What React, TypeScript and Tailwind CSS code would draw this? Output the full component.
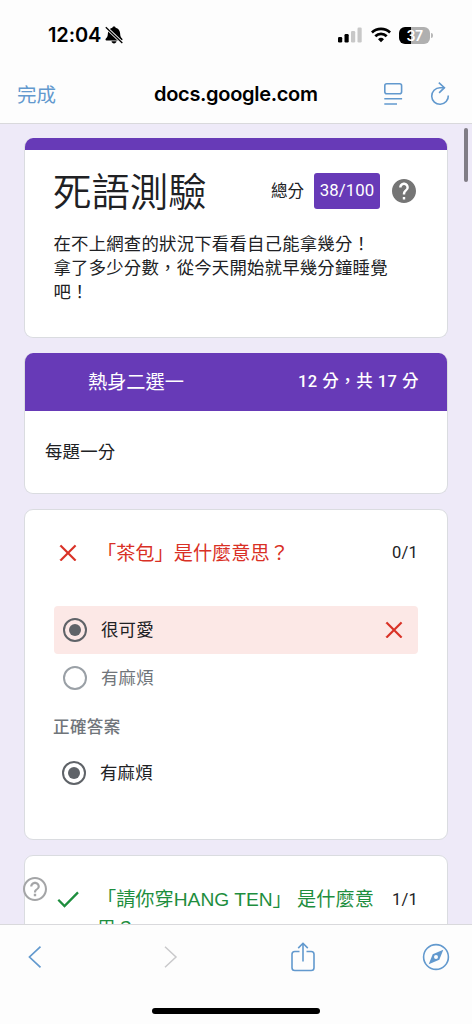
import type { ReactNode } from 'react';

type MarkProps = { className?: string };

const CrossMark = ({ className = '' }: MarkProps) => (
  <svg className={`h-6 w-6 shrink-0 ${className}`} viewBox="0 0 24 24" fill="#d93025">
    <path d="M20 5.2 18.8 4 12 10.8 5.2 4 4 5.2 10.8 12 4 18.8 5.2 20 12 13.2 18.8 20 20 18.8 13.2 12z" stroke="#d93025" strokeWidth="0.7" />
  </svg>
);

const CheckMark = ({ className = '' }: MarkProps) => (
  <svg className={`h-6 w-6 shrink-0 ${className}`} viewBox="0 0 24 24" fill="none" stroke="#1e8e3e" strokeWidth="2.3">
    <path d="M2.3 12.8 8.5 19 22 5.4" />
  </svg>
);

const Radio = ({ checked }: { checked: boolean }) => (
  <svg className="h-6 w-6 shrink-0" viewBox="0 0 24 24">
    <circle cx="12" cy="12" r="11" fill="none" stroke={checked ? '#5f6368' : '#9aa0a6'} strokeWidth="2" />
    {checked && <circle cx="12" cy="12" r="6" fill="#5f6368" />}
  </svg>
);

const Card = ({ className = '', children }: { className?: string; children: ReactNode }) => (
  <section className={`shrink-0 overflow-hidden rounded-[9px] border border-[#dadce0] bg-white ${className}`}>
    {children}
  </section>
);

const StatusBar = () => (
  <div className="flex h-[70px] items-center pl-12 pr-[39px] font-['Inter',sans-serif]">
    <span className="text-[20px] font-semibold leading-6 tracking-[-0.1px]">12:04</span>
    <svg className="ml-1 h-[18px] w-[18px]" viewBox="0 0 18 18">
      <path d="M9 .5c-.9 0-1.500.5-1.600 1.200C4.600 2.400 3 4.600 2.900 7.200c-.1 3.100-.9 4.300-2 5.400-.8.8-.4 1.900.5 1.900h15.200c.9 0 1.300-1.100.5-1.900-1.100-1.100-1.900-2.300-2-5.400-.1-2.600-1.700-4.800-4.500-5.500C10.500 1 9.900.5 9 .5zM6.500 15.300h5c-.2 1.300-1.200 2.100-2.500 2.100s-2.300-.8-2.500-2.100z" />
      <path d="M.8 1.200 17.300 17" stroke="#fdfdfd" strokeWidth="3" />
      <path d="M.8 1.200 17.300 17" stroke="#000" strokeWidth="1.3" />
    </svg>
    <svg className="ml-auto h-4 w-6" viewBox="0 0 24 16">
      <rect x="0" y="10" width="4.2" height="5.5" rx="1.2" />
      <rect x="6.5" y="7" width="4.2" height="8.5" rx="1.2" />
      <rect x="13" y="4" width="4.2" height="11.5" rx="1.2" fill="#c8c8c8" />
      <rect x="19.5" y="0.6" width="4.2" height="14.9" rx="1.2" fill="#c8c8c8" />
    </svg>
    <svg className="ml-[9px] h-4 w-5" viewBox="0 0 20 16" fill="none" stroke="#000" strokeWidth="2.7">
      <path d="M.9 5.500a13 13 0 0 1 18.200 0" />
      <path d="M4.300 9.200a8.200 8.200 0 0 1 11.400 0" />
      <path d="M10 15.200 7 12.200a4.300 4.300 0 0 1 6 0z" fill="#000" stroke="none" />
    </svg>
    <div className="ml-2 flex h-[17px] w-[31px] items-center justify-center rounded-[6px] bg-linear-to-r from-black from-38% to-[#b0b0b0] to-38%">
      <span className="mt-px text-[14px] font-semibold leading-[14px] tracking-[-0.5px] text-white">37</span>
    </div>
    <div className="ml-px h-[5px] w-[2px] rounded-r-full bg-[#b8b8b8]" />
  </div>
);

const BrowserBar = () => (
  <div className="flex h-[53px] items-center pb-[6px] pl-[17px] pr-[22px]">
    <span className="mt-1 w-[137px] text-[19.5px] leading-6 text-[#6299ce]">完成</span>
    <span className="font-['Inter',sans-serif] text-[20px] font-semibold leading-6 tracking-[-0.31px]">docs.google.com</span>
    <svg className="ml-auto h-6 w-5" viewBox="0 0 20 24" fill="none" stroke="#6299ce" strokeWidth="1.6">
      <rect x="1.8" y="1.8" width="16.8" height="10" rx="2" />
      <path d="M1.300 16.700h17.800M1.300 22h12.700" />
    </svg>
    <svg className="ml-[27px] h-6 w-5" viewBox="0 0 20 24" fill="none" stroke="#6299ce" strokeWidth="1.6">
      <path d="M14.500 5.700H10A8.300 8.300 0 1 0 18.300 13.500" />
      <path d="m8.800.6 5.600 5.100-5.300 5.100" />
    </svg>
  </div>
);

const Toolbar = () => (
  <footer className="h-[100px] shrink-0 border-t border-[#d9d9dc] bg-[#fdfdfd]">
    <div className="flex h-16 items-center justify-between pl-7 pr-[22px]">
      <svg className="h-6 w-[14px]" viewBox="0 0 14 24" fill="none" stroke="#6299ce" strokeWidth="1.7">
        <path d="M12.500 1.700 1.500 12l11 10.300" />
      </svg>
      <svg className="ml-2 h-6 w-[14px]" viewBox="0 0 14 24" fill="none" stroke="#c9c9cb" strokeWidth="1.5">
        <path d="M1 1.700 12 12 1 22.300" />
      </svg>
      <svg className="mr-[-7px] h-[30px] w-6" viewBox="0 0 24 30" fill="none" stroke="#6299ce" strokeWidth="1.6">
        <path d="M8.500 9.500H3.800A2.800 2.800 0 0 0 1 12.300v13.400a2.800 2.800 0 0 0 2.800 2.800h16.400a2.800 2.800 0 0 0 2.800-2.800V12.300a2.800 2.800 0 0 0-2.800-2.800h-4.700" />
        <path d="M12 19.500V1.500M7.200 6.100 12 1.300l4.800 4.800" />
      </svg>
      <svg className="h-7 w-7" viewBox="0 0 28 28">
        <circle cx="14" cy="14" r="12.4" fill="none" stroke="#6299ce" strokeWidth="1.6" />
        <path fillRule="evenodd" fill="#6299ce" d="M21.300 6.700 17.300 16.800 6.700 21.300 10.700 11.200zM14 12a2 2 0 1 0 0 4 2 2 0 0 0 0-4z" />
      </svg>
    </div>
    <div className="mx-auto mt-[19px] h-[6px] w-[168px] rounded-full bg-black" />
  </footer>
);

const Answer = ({ label, checked, wrong }: { label: string; checked: boolean; wrong?: boolean }) => (
  <div className={`flex h-12 items-center rounded pl-[9px] pr-3 ${wrong ? 'bg-[#fce8e6]' : ''}`}>
    <Radio checked={checked} />
    <span className={`ml-[14px] text-[17.4px] tracking-[0.2px] ${checked ? 'text-[#202124]' : 'text-[#70757a]'}`}>{label}</span>
    {wrong && <CrossMark className="ml-auto" />}
  </div>
);

export default function App() {
  return (
    <div className="flex h-[1024px] w-[472px] flex-col overflow-hidden bg-[#eeeaf8] font-['Roboto','Noto_Sans_CJK_TC',sans-serif] text-[#202124]">
      <header className="shrink-0 border-b border-[#d9d9dc] bg-[#fdfdfd] text-black">
        <StatusBar />
        <BrowserBar />
      </header>

      <main className="relative flex min-h-0 flex-1 flex-col gap-[15px] overflow-hidden px-6 pt-[14px]">
        <Card className="h-[200px] border-t-0">
          <div className="-mx-px h-3 bg-[#673ab7]" />
          <div className="flex h-[82px] items-center pl-7 pr-[31px]">
            <h1 className="mt-[3px] text-[38.4px] font-[350] leading-[48px]">死語測驗</h1>
            <span className="ml-auto mt-[2px] text-[16.5px]">總分</span>
            <span className="ml-[10px] flex h-9 w-[66px] items-center justify-center rounded-[3px] bg-[#673ab7] pb-px text-[16.8px] tracking-[0.1px] text-white">
              38/100
            </span>
            <svg className="ml-3 h-6 w-6" viewBox="2 2 20 20" fill="#757575">
              <path d="M12 2C6.480 2 2 6.480 2 12s4.480 10 10 10 10-4.480 10-10S17.520 2 12 2zm1 17h-2v-2h2v2zm2.070-7.750-.9.920C13.450 12.900 13 13.500 13 15h-2v-.5c0-1.100.45-2.100 1.170-2.830l1.240-1.260c.37-.36.590-.86.590-1.410 0-1.100-.9-2-2-2s-2 .9-2 2H8c0-2.210 1.790-4 4-4s4 1.790 4 4c0 .88-.36 1.680-.93 2.250z" />
            </svg>
          </div>
          <p className="pl-[28.5px] text-[17.4px] leading-6 tracking-[0.2px]">
            在不上網查的狀況下看看自己能拿幾分！
            <br />
            拿了多少分數，從今天開始就早幾分鐘睡覺
            <br />
            吧！
          </p>
        </Card>

        <Card className="h-[141px] border-t-0">
          <div className="-mx-px flex h-[58px] items-center justify-between bg-[#673ab7] pl-16 pr-[29px] text-white">
            <h2 className="mt-[2px] text-[19.2px]">熱身二選一</h2>
            <span className="text-[16.5px] font-medium tracking-[0.48px]">12 分，共 17 分</span>
          </div>
          <p className="flex h-[82px] items-center pl-5 text-[17.4px] tracking-[0.2px]">每題一分</p>
        </Card>

        <Card className="h-[331px] px-[29px]">
          <div className="mt-[31px] flex h-6 items-center">
            <CrossMark className="ml-[2px]" />
            <h3 className="ml-[17px] mt-[3px] whitespace-nowrap text-[19.2px] text-[#d93025]">「茶包」是什麼意思？</h3>
            <span className="ml-auto mt-px text-[16.5px] tracking-[0.2px]">0/1</span>
          </div>
          <div className="mt-[41px]">
            <Answer label="很可愛" checked wrong />
            <Answer label="有麻煩" checked={false} />
          </div>
          <p className="-ml-px mt-[14px] text-[16.5px] font-medium leading-6 tracking-[0.4px] text-[#70757a]">正確答案</p>
          <div className="-ml-px mt-[9px]">
            <Answer label="有麻煩" checked />
          </div>
        </Card>

        <Card className="h-[331px] px-[29px]">
          <div className="mt-[29px] flex items-start">
            <CheckMark className="ml-[2px] mt-[2px]" />
            <h3 className="ml-[17px] w-[290px] font-['Liberation_Sans','Noto_Sans_CJK_TC',sans-serif] text-[19.2px] leading-[30px] text-[#1e8e3e]">
              「請你穿HANG TEN」 是什麼意思？
            </h3>
            <span className="ml-auto text-[16.5px] leading-[29px] tracking-[0.2px]">1/1</span>
          </div>
        </Card>

        {/* scroll thumb and floating help button */}
        <div className="absolute right-1 top-1 h-[54px] w-1 rounded-full bg-[#807d86]" />
        <button className="absolute left-[23px] top-[753px]">
          <svg className="h-6 w-6" viewBox="2 2 20 20" fill="#a4a5a7">
            <path d="M11 18h2v-2h-2v2zm1-16C6.480 2 2 6.480 2 12s4.480 10 10 10 10-4.480 10-10S17.520 2 12 2zm0 18.300c-4.580 0-8.300-3.720-8.300-8.300s3.720-8.300 8.300-8.300 8.300 3.720 8.300 8.300-3.720 8.300-8.300 8.300zm0-14.300c-2.210 0-4 1.790-4 4h1.800c0-1.210.99-2.200 2.200-2.200s2.200.99 2.200 2.200c0 2-3.100 1.750-3.100 5h1.800c0-2.250 3.100-2.500 3.100-5 0-2.210-1.790-4-4-4z" />
          </svg>
        </button>
      </main>

      <Toolbar />
    </div>
  );
}
